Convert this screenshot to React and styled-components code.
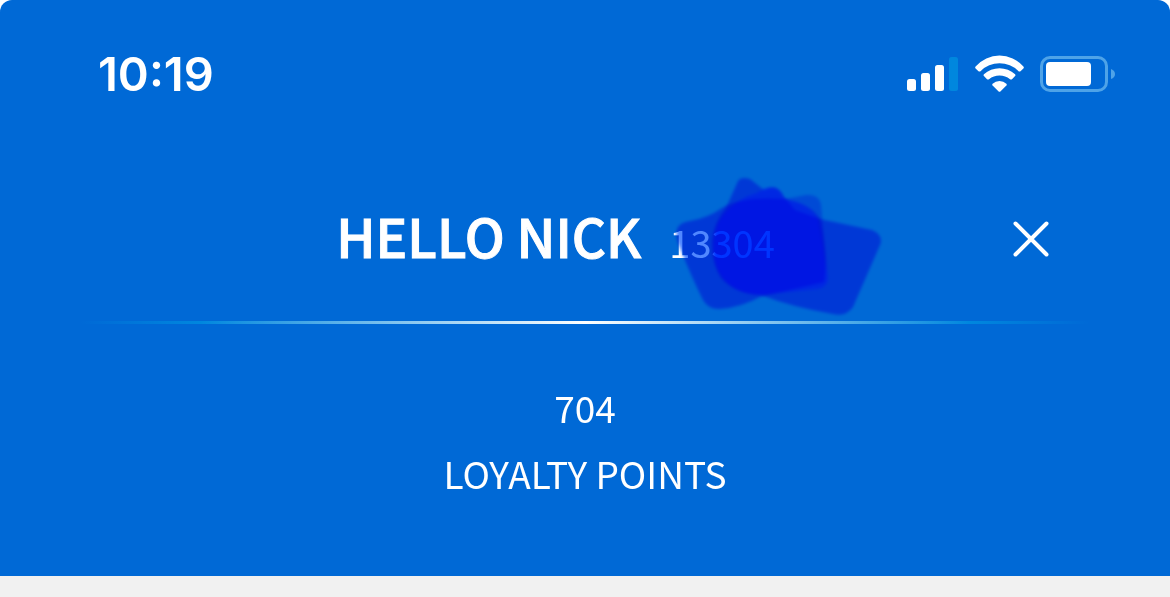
// REACT
import React from "react";
// STYLED COMPONENTS
import styled, { createGlobalStyle } from "styled-components";

export default function App() {
  return (
    <>
      <GlobalStyle />
      <Panel>
        <StatusBar>
          <Time>10:19</Time>
          <StatusIcons>
            <Signal />
            <Wifi />
            <Battery />
          </StatusIcons>
        </StatusBar>
        <TitleRow>
          <Greeting>
            <h1>HELLO NICK</h1>
            <Member>
              13304
              <Scribble />
            </Member>
          </Greeting>
          <CloseButton type="button" aria-label="Close">
            <svg width="36" height="36" viewBox="0 0 36 36">
              <path
                d="M2.5 2.5L33.5 33.5M33.5 2.5L2.5 33.5"
                stroke="#fff"
                strokeWidth="4"
                strokeLinecap="round"
              />
            </svg>
          </CloseButton>
        </TitleRow>
        <Divider />
        <Points>
          <p>704</p>
          <p>LOYALTY POINTS</p>
        </Points>
      </Panel>
    </>
  );
}

function Signal() {
  return (
    <svg width="52" height="36" viewBox="0 0 52 36" fill="#fff">
      <rect x="0" y="23" width="9" height="12" rx="2.5" />
      <rect x="14" y="17" width="9" height="18" rx="2.5" />
      <rect x="28" y="9" width="9" height="26" rx="2.5" />
      <rect x="42" y="1" width="9" height="34" rx="2.5" fill="#0087de" />
    </svg>
  );
}

function Wifi() {
  return (
    <svg width="49" height="38" viewBox="0 0 49 38" fill="#fff">
      <path d="M.6 11.5A31.6 31.6 0 0 1 48.4 11.5Q49.3 12.5 48.4 13.4L45.5 16.2Q44.5 17 43.5 16.2A26.8 26.8 0 0 0 5.5 16.2Q4.5 17 3.5 16.2L.6 13.4Q-.3 12.5 .6 11.5Z" />
      <path d="M8.9 19.2A23.2 23.2 0 0 1 40.1 19.2Q41 20.1 40.1 21L37 24.2Q36 25 35 24.2A16.8 16.8 0 0 0 14 24.2Q13 25 12 24.2L8.9 21Q8 20.1 8.9 19.2Z" />
      <path d="M17.6 28.8A10 10 0 0 1 31.4 28.8Q32.2 29.6 31.4 30.5L25.4 36.4Q24.5 37.2 23.6 36.4L17.6 30.5Q16.8 29.6 17.6 28.8Z" />
    </svg>
  );
}

function Battery() {
  return (
    <svg width="75" height="38" viewBox="0 0 75 38">
      <rect
        x="1.5"
        y="2.5"
        width="65"
        height="33"
        rx="8.5"
        fill="none"
        stroke="#4ea3e8"
        strokeWidth="3"
      />
      <rect x="6" y="7" width="45" height="24" rx="4" fill="#fff" />
      <path d="M71 14Q75 15.5 75 19T71 24Z" fill="#4ea3e8" />
    </svg>
  );
}

// translucent marker strokes, darker where they overlap
function Scribble() {
  return (
    <>
      <Ink $blend="multiply" width="220" height="160" viewBox="670 165 220 160">
        <path
          className="light"
          d="M677 229Q680 222 690 221Q708 218 722 208Q742 196 785 199Q812 204 820 220Q828 262 824 282Q790 290 762 296Q740 308 719 309Q708 309 703 300Q692 278 680 248Q675 238 677 229Z"
        />
        <path
          className="light"
          d="M738 181Q741 176 750 179L764 190Q777 182 784 197L795 210L820 219L872 230Q884 235 880 245L853 307Q846 317 833 314Q792 307 761 295Q736 294 721 278Q711 262 712 240Q714 222 726 208Z"
        />
        <path
          className="dark"
          d="M726 212Q740 197 757 193Q768 184 779 190L785 199L806 195Q819 194 821 204L828 278Q828 287 818 289L760 295Q734 293 723 278Q711 264 715 236Q717 221 726 212Z"
        />
      </Ink>
      <Ink $blend="screen" width="220" height="160" viewBox="670 165 220 160">
        <path
          className="glow"
          d="M726 212Q740 197 757 193Q768 184 779 190L785 199Q812 204 818 220L828 278Q828 287 818 289L760 295Q734 293 723 278Q711 264 715 236Q717 221 726 212Z"
        />
      </Ink>
    </>
  );
}

//! ****************** STYLES ******************//

const GlobalStyle = createGlobalStyle`
  * {
    box-sizing: border-box;
    margin: 0;
  }
  html {
    background: #f1f1f1;
  }
  body {
    background: linear-gradient(#fff 40px, #f1f1f1 40px);
    font-family: "Noto Sans CJK JP", "Noto Sans CJK SC", sans-serif;
    color: #fff;
  }
  svg {
    display: block;
  }
`;

const Panel = styled.main`
  padding: 46px 55px 70px;
  border-radius: 12px 12px 0 0;
  background: #0069d6;
`;

const StatusBar = styled.header`
  display: flex;
  justify-content: space-between;
  align-items: center;
  padding-left: 43px;
`;

const Time = styled.time`
  font-family: Inter, sans-serif;
  font-size: 47px;
  font-weight: 600;
  line-height: 56px;
`;

const StatusIcons = styled.div`
  display: flex;
  align-items: center;
  gap: 16px;
`;

const TitleRow = styled.div`
  display: flex;
  align-items: flex-start;
  margin-top: 93px;
  padding: 0 66px 0 43px;
`;

const Greeting = styled.div`
  display: flex;
  flex: 1;
  justify-content: center;
  align-items: baseline;
  gap: 28px;
  line-height: 80px;
  h1 {
    font-size: 53px;
    font-weight: 500;
    -webkit-text-stroke: 1px #fff;
  }
`;

const Member = styled.span`
  position: relative;
  font-size: 38px;
  font-weight: 400;
`;

const Ink = styled.svg`
  position: absolute;
  top: -37px;
  left: 1px;
  mix-blend-mode: ${({ $blend }) => $blend};
  path {
    mix-blend-mode: multiply;
    filter: blur(1.5px);
  }
  .light {
    fill: #5088ff;
  }
  .dark {
    fill: #00b4ff;
  }
  .glow {
    fill: #000050;
    mix-blend-mode: normal;
  }
`;

const CloseButton = styled.button`
  display: flex;
  align-items: center;
  height: 88px;
  padding: 0;
  border: none;
  background: none;
  cursor: pointer;
`;

const Divider = styled.hr`
  height: 3px;
  margin: 38px 25px 0;
  border: none;
  background: linear-gradient(
    90deg,
    rgba(0, 135, 222, 0),
    #0087de 12%,
    #fff 50%,
    #0087de 88%,
    rgba(0, 135, 222, 0)
  );
`;

const Points = styled.section`
  margin-top: 50px;
  font-size: 37px;
  font-weight: 400;
  line-height: 66px;
  text-align: center;
`;
